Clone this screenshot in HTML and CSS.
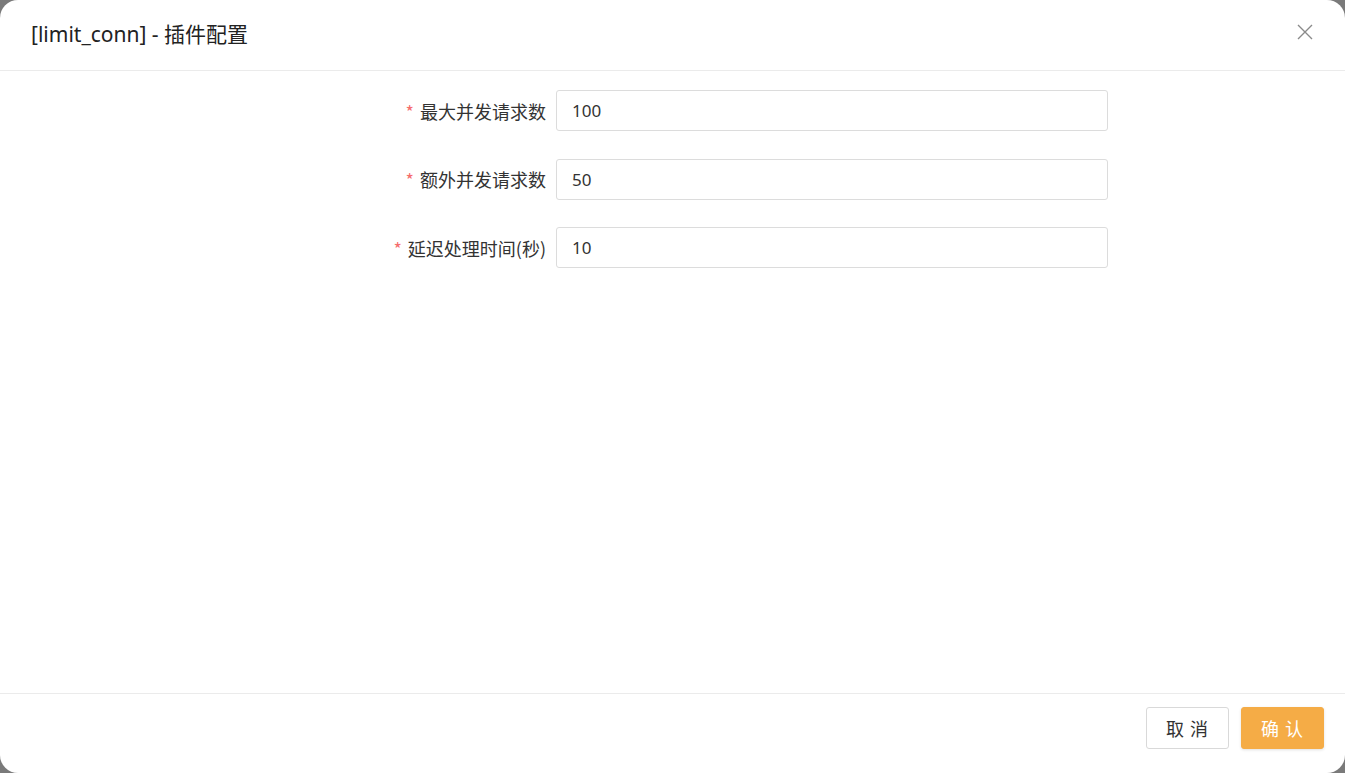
FILE: index.html
```html
<!DOCTYPE html>
<html lang="zh-CN">
<head>
<meta charset="utf-8">
<title>[limit_conn] - 插件配置</title>
<link rel="stylesheet" href="styles.css">
</head>
<body>
<div class="modal">
  <div class="modal-header">
    <div class="modal-title">[limit_conn] - 插件配置</div>
    <button class="close" aria-label="关闭">
      <svg width="16" height="16" viewBox="0 0 16 16"><path d="M1 1 L15 15 M15 1 L1 15" stroke="#8a8a8a" stroke-width="1.4" fill="none"/></svg>
    </button>
  </div>
  <div class="modal-body">
    <form class="form">
      <div class="form-row">
        <label class="form-label"><span class="req">*</span>最大并发请求数</label>
        <input class="form-input" type="text" value="100">
      </div>
      <div class="form-row">
        <label class="form-label"><span class="req">*</span>额外并发请求数</label>
        <input class="form-input" type="text" value="50">
      </div>
      <div class="form-row">
        <label class="form-label"><span class="req">*</span>延迟处理时间(秒)</label>
        <input class="form-input" type="text" value="10">
      </div>
    </form>
  </div>
  <div class="modal-footer">
    <button class="btn btn-default">取 消</button>
    <button class="btn btn-primary">确 认</button>
  </div>
</div>
</body>
</html>
```

FILE: styles.css
```css
html, body {
  margin: 0;
  padding: 0;
  height: 100%;
}
body {
  background: #7a7a7a;
  font-family: "Noto Sans", "Noto Sans CJK SC", sans-serif;
  color: #333;
}
.modal {
  box-sizing: border-box;
  width: 1345px;
  height: 773px;
  background: #fff;
  border-radius: 18px;
  display: flex;
  flex-direction: column;
  overflow: hidden;
}
.modal-header {
  box-sizing: border-box;
  height: 71px;
  flex: none;
  border-bottom: 1px solid #ebebeb;
  display: flex;
  align-items: center;
  justify-content: space-between;
  padding: 0 32px 0 31px;
}
.modal-title {
  font-size: 21px;
  color: #222;
  padding-bottom: 4px;
}
.close {
  background: none;
  border: 0;
  padding: 0;
  width: 16px;
  height: 16px;
  display: flex;
  margin-top: -6px;
  cursor: pointer;
}
.modal-body {
  flex: 1;
  padding-top: 19px;
}
.form {
  display: flex;
  flex-direction: column;
  gap: 27.5px;
}
.form-row {
  display: flex;
  align-items: center;
  height: 41px;
}
.form-label {
  width: 546px;
  box-sizing: border-box;
  text-align: right;
  font-size: 18px;
  color: #333;
  font-family: "Noto Sans CJK SC", sans-serif;
}
.req {
  color: #f56c6c;
  margin-right: 6px;
  font-size: 18px;
}
.form-input {
  box-sizing: border-box;
  margin-left: 10px;
  width: 552px;
  height: 41px;
  border: 1px solid #dcdcdc;
  border-radius: 3px;
  padding: 0 15px;
  font-size: 17px;
  font-family: "Noto Sans", sans-serif;
  color: #333;
  outline: none;
}
.modal-footer {
  box-sizing: border-box;
  height: 80px;
  flex: none;
  border-top: 1px solid #ebebeb;
  display: flex;
  justify-content: flex-end;
  align-items: flex-start;
  padding: 13px 21px 0 0;
  gap: 12px;
}
.btn {
  width: 83px;
  height: 42px;
  border-radius: 3px;
  font-size: 18px;
  letter-spacing: 1px;
  font-family: "Noto Sans CJK SC", sans-serif;
  cursor: pointer;
}
.btn-default {
  background: #fff;
  border: 1px solid #d9d9d9;
  color: #333;
}
.btn-primary {
  background: #f5ac46;
  border: 1px solid #f5ac46;
  color: #fff;
  box-shadow: 0 1px 3px rgba(0,0,0,0.12);
}
```
